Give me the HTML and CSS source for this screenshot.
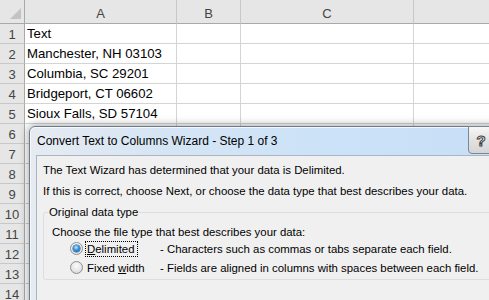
FILE: index.html
```html
<!DOCTYPE html>
<html>
<head>
<meta charset="utf-8">
<link rel="stylesheet" href="styles.css">
</head>
<body>
<div class="grid">
  <div class="hd corner"><svg width="24" height="23" viewBox="0 0 24 23"><polygon points="21,8 21,19 10,19" fill="#c3c3c3"/></svg></div>
  <div class="hd col">A</div><div class="hd col">B</div><div class="hd col">C</div><div class="hd col"></div>

  <div class="rh">1</div><div class="c">Text</div><div class="c"></div><div class="c"></div><div class="c"></div>
  <div class="rh">2</div><div class="c">Manchester, NH 03103</div><div class="c"></div><div class="c"></div><div class="c"></div>
  <div class="rh">3</div><div class="c">Columbia, SC 29201</div><div class="c"></div><div class="c"></div><div class="c"></div>
  <div class="rh">4</div><div class="c">Bridgeport, CT 06602</div><div class="c"></div><div class="c"></div><div class="c"></div>
  <div class="rh">5</div><div class="c">Sioux Falls, SD 57104</div><div class="c"></div><div class="c"></div><div class="c"></div>
  <div class="rh">6</div><div class="c"></div><div class="c"></div><div class="c"></div><div class="c"></div>
  <div class="rh">7</div><div class="c"></div><div class="c"></div><div class="c"></div><div class="c"></div>
  <div class="rh">8</div><div class="c"></div><div class="c"></div><div class="c"></div><div class="c"></div>
  <div class="rh">9</div><div class="c"></div><div class="c"></div><div class="c"></div><div class="c"></div>
  <div class="rh">10</div><div class="c"></div><div class="c"></div><div class="c"></div><div class="c"></div>
  <div class="rh">11</div><div class="c"></div><div class="c"></div><div class="c"></div><div class="c"></div>
  <div class="rh">12</div><div class="c"></div><div class="c"></div><div class="c"></div><div class="c"></div>
  <div class="rh">13</div><div class="c"></div><div class="c"></div><div class="c"></div><div class="c"></div>
  <div class="rh">14</div><div class="c"></div><div class="c"></div><div class="c"></div><div class="c"></div>
</div>

<div class="dialog">
  <div class="titlebar">
    <div class="title">Convert Text to Columns Wizard - Step 1 of 3</div>
    <div class="help">?</div>
    <div class="close"></div>
  </div>
  <div class="body">
    <div class="line">The Text Wizard has determined that your data is Delimited.</div>
    <div class="line gap">If this is correct, choose Next, or choose the data type that best describes your data.</div>
    <fieldset class="group">
      <legend>Original data type</legend>
      <div class="choose">Choose the file type that best describes your data:</div>
      <div class="opt">
        <span class="radio on"></span>
        <span class="lbl focus"><u>D</u>elimited</span>
        <span class="desc">- Characters such as commas or tabs separate each field.</span>
      </div>
      <div class="opt">
        <span class="radio"></span>
        <span class="lbl">Fixed <u>w</u>idth</span>
        <span class="desc">- Fields are aligned in columns with spaces between each field.</span>
      </div>
    </fieldset>
  </div>
</div>
</body>
</html>
```
FILE: styles.css
```css
html, body {
  margin: 0;
  padding: 0;
}
body {
  width: 489px;
  height: 300px;
  overflow: hidden;
  position: relative;
  background: #fff;
  font-family: "Liberation Sans", Arial, sans-serif;
}
.grid {
  display: grid;
  grid-template-columns: 25px 152px 64px 173px 100px;
  grid-template-rows: 24px repeat(14, 20px);
}
.hd {
  box-sizing: border-box;
  background: #e6e6e6;
  border-right: 1px solid #c8c8c8;
  border-bottom: 1px solid #a9a9a9;
  display: flex;
  align-items: center;
  justify-content: center;
  padding-top: 3px;
  font-size: 13px;
  color: #444;
}
.corner {
  padding: 0;
  border-right-color: #a9a9a9;
  align-items: flex-start;
  justify-content: flex-start;
}
.corner svg { display: block; }
.rh {
  box-sizing: border-box;
  background: #e6e6e6;
  border-right: 1px solid #a9a9a9;
  border-bottom: 1px solid #c8c8c8;
  display: flex;
  align-items: center;
  justify-content: center;
  padding-top: 1px;
  font-size: 13px;
  color: #444;
}
.c {
  box-sizing: border-box;
  border-right: 1px solid #d4d4d4;
  border-bottom: 1px solid #d4d4d4;
  padding: 1px 0 0 2px;
  font-size: 13.2px;
  line-height: 18px;
  white-space: nowrap;
  overflow: hidden;
  color: #000;
}

.dialog {
  position: absolute;
  left: 29px;
  top: 126px;
  width: 513px;
  height: 210px;
  box-sizing: border-box;
  border: 1px solid #6c7b8b;
  border-radius: 6px 6px 0 0;
  background: linear-gradient(90deg, #e6ebf1 0%, #d6e5f4 25%, #cbe2f8 60%, #c6def6 100%);
  box-shadow: 0 0 9px 1px rgba(0, 0, 0, 0.35), inset 0 1px 0 rgba(255, 255, 255, 0.75), inset 1px 0 0 rgba(255, 255, 255, 0.6);
}
.titlebar {
  display: flex;
  height: 28px;
  align-items: center;
}
.title {
  flex: 1;
  padding-left: 7px;
  font-size: 12px;
  color: #000;
  white-space: nowrap;
}
.help {
  align-self: flex-start;
  width: 26px;
  height: 28px;
  margin-top: -1px;
  box-sizing: border-box;
  border: 1px solid #7a8796;
  border-radius: 0 0 4px 4px;
  background: linear-gradient(#f7f7f7, #e2e2e2 50%, #d5d5d5);
  display: flex;
  align-items: center;
  justify-content: center;
  font-size: 15px;
  font-weight: bold;
  color: #fff;
  -webkit-text-stroke: 1px #3c3c3c;
}
.close {
  align-self: flex-start;
  width: 43px;
  height: 20px;
  margin-top: -1px;
  margin-right: 4px;
  border-radius: 0 0 4px 4px;
  background: linear-gradient(#e8a493, #c74a2f);
}
.body {
  margin-left: 6px;
  height: 200px;
  box-sizing: border-box;
  background: #f0f0f0;
  border-top: 1px solid #a9b5c3;
  border-left: 1px solid #a9b5c3;
  padding: 7px 0 0 6px;
  font-size: 11.4px;
  line-height: 14px;
  color: #000;
}
.line { white-space: nowrap; }
.gap { margin-top: 7px; }
.group {
  margin: 7px 0 0 0;
  padding: 0 0 2px 4px;
  border: 1px solid #d5dfe5;
  border-radius: 3px;
  min-width: 0;
}
.group legend {
  padding: 0 1px;
  line-height: 14px;
}
.choose {
  margin-top: 6px;
  padding-left: 4px;
  white-space: nowrap;
}
.opt {
  display: flex;
  align-items: center;
  height: 19px;
  padding-left: 22px;
  white-space: nowrap;
}
.radio {
  flex: none;
  width: 13px;
  height: 13px;
  box-sizing: border-box;
  border-radius: 50%;
  border: 1px solid #8e8f8f;
  background: radial-gradient(circle at 50% 35%, #fbfbfb 0%, #e6e6e6 55%, #cfcfcf 100%);
  margin-right: 2px;
  display: flex;
  align-items: center;
  justify-content: center;
}
.radio.on {
  background: radial-gradient(circle at 50% 35%, #ffffff 0%, #ececec 70%, #dcdcdc 100%);
}
.radio.on::after {
  content: "";
  width: 7px;
  height: 7px;
  border-radius: 50%;
  background: radial-gradient(circle at 45% 35%, #c6ecff 0%, #3a9be0 40%, #15599c 90%);
  box-shadow: 0 0 0 0.5px #1c4f80;
}
.lbl {
  box-sizing: border-box;
  width: 75px;
  padding: 0 1px;
  border: 1px solid transparent;
  line-height: 14px;
}
.lbl.focus {
  border: 1px dotted #000;
  width: 53px;
  margin-right: 22px;
}
```
